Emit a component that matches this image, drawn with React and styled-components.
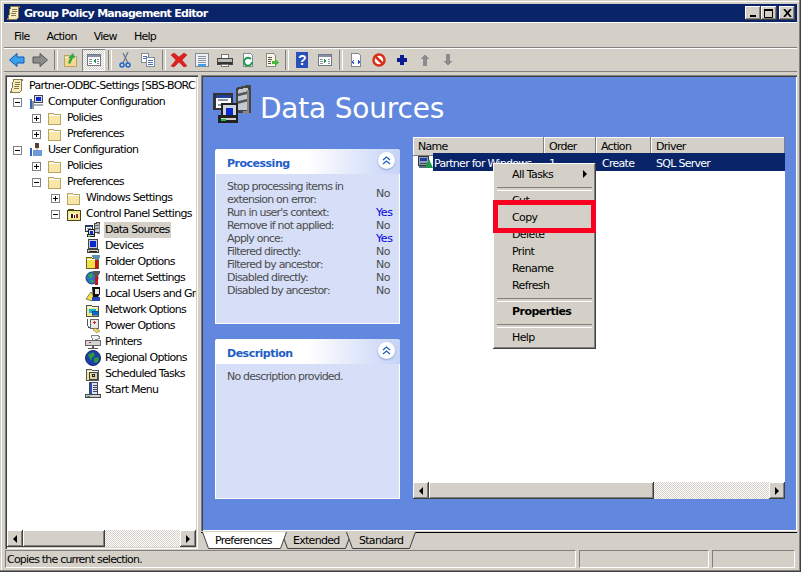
import styled, { createGlobalStyle } from 'styled-components'

const GlobalStyle = createGlobalStyle`
  html, body {
    margin: 0;
    padding: 0;
    background: #d4d0c8;
    overflow: hidden;
  }
  * {
    box-sizing: border-box;
  }
`

const FONT = `"DejaVu Sans", Verdana, sans-serif`
const BEVEL = 'inset -1px -1px #404040, inset 1px 1px #fff, inset -2px -2px #808080'

const Frame = styled.div`
  width: 801px;
  height: 572px;
  padding: 4px;
  display: flex;
  flex-direction: column;
  background: #d4d0c8;
  font-family: ${FONT};
  font-size: 11px;
  letter-spacing: -0.72px;
  color: #000;
  box-shadow: inset -1px -1px #404040, inset -2px -2px #808080, inset 1px 1px #d4d0c8, inset 2px 2px #fff;
  overflow: hidden;
`

const TitleBar = styled.div`
  height: 18px;
  flex: none;
  display: flex;
  align-items: center;
  padding: 0 2px 0 2px;
  background: #0a246a;
  color: #fff;
  font-weight: 700;
  letter-spacing: -0.7px;
`

const TitleText = styled.span`
  margin-left: 2px;
  flex: 1;
`

const WinButtons = styled.div`
  display: flex;
`

const WinButton = styled.div`
  width: 16px;
  height: 14px;
  margin-left: ${p => p.$gap || 0}px;
  background: #d4d0c8;
  box-shadow: ${BEVEL};
  display: flex;
  align-items: center;
  justify-content: center;
`

const MenuBar = styled.div`
  height: 25px;
  flex: none;
  display: flex;
  align-items: center;
  gap: 17px;
  padding: 2px 0 0 10px;
  border-top: 1px solid #fff;
`

const Toolbar = styled.div`
  height: 25px;
  flex: none;
  display: flex;
  align-items: center;
  padding-left: 1px;
  border-top: 1px solid #808080;
  border-bottom: 1px solid #808080;
  box-shadow: inset 0 1px #fff;
`

const ToolButton = styled.div`
  width: 23px;
  height: 22px;
  flex: none;
  display: flex;
  align-items: center;
  justify-content: center;
  ${p => p.$pressed && `
    background: repeating-conic-gradient(#d4d0c8 0 25%, #fff 0 50%) 0 0 / 2px 2px;
    box-shadow: inset 1px 1px #808080, inset -1px -1px #fff;
  `}
`

const ToolSep = styled.div`
  width: 8px;
  height: 20px;
  flex: none;
  &:after {
    content: '';
    display: block;
    width: 2px;
    height: 20px;
    margin-left: 3px;
    border-left: 1px solid #808080;
    border-right: 1px solid #fff;
  }
`

const Main = styled.div`
  flex: 1;
  min-height: 0;
  display: flex;
  padding: 3px 0 0 1px;
  gap: 3px;
`

const TreePanel = styled.div`
  width: 193px;
  flex: none;
  display: flex;
  flex-direction: column;
  padding: 2px;
  background: #fff;
  box-shadow: inset 1px 1px #808080, inset 2px 2px #404040, inset -1px -1px #fff, inset -2px -2px #d4d0c8;
`

const TreeList = styled.div`
  flex: 1;
  min-height: 0;
  overflow: hidden;
  padding-top: 1px;
`

const TreeRow = styled.div`
  height: 16px;
  display: flex;
  align-items: center;
  padding-left: ${p => p.$indent}px;
  white-space: nowrap;
`

const Expander = styled.div`
  width: 9px;
  height: 9px;
  flex: none;
  border: 1px solid #808080;
  background: #fff;
  position: relative;
  margin-right: 6px;
  &:before {
    content: '';
    position: absolute;
    left: 1px;
    top: 3px;
    width: 5px;
    height: 1px;
    background: #000;
  }
  ${p => p.$plus && `
    &:after {
      content: '';
      position: absolute;
      left: 3px;
      top: 1px;
      width: 1px;
      height: 5px;
      background: #000;
    }
  `}
`

const TreeLabel = styled.span`
  margin-left: 3px;
  padding: 1px;
  line-height: 14px;
  ${p => p.$selected && 'background: #d4d0c8;'}
`

const Scrollbar = styled.div`
  height: 17px;
  flex: none;
  display: flex;
  background: repeating-conic-gradient(#d4d0c8 0 25%, #fff 0 50%) 0 0 / 2px 2px;
`

const ScrollButton = styled.div`
  width: 16px;
  flex: none;
  background: #d4d0c8;
  box-shadow: ${BEVEL};
  display: flex;
  align-items: center;
  justify-content: center;
`

const ScrollThumb = styled.div`
  width: ${p => p.$width}px;
  flex: none;
  background: #d4d0c8;
  box-shadow: ${BEVEL};
`

const ScrollTrack = styled.div`
  flex: 1;
`

const Arrow = styled.div`
  width: 0;
  height: 0;
  border-top: 4px solid transparent;
  border-bottom: 4px solid transparent;
  ${p => (p.$right ? 'border-left: 4px solid #000;' : 'border-right: 4px solid #000;')}
`

const RightSide = styled.div`
  flex: 1;
  min-width: 0;
  display: flex;
  flex-direction: column;
`

const Pane = styled.div`
  height: 456px;
  flex: none;
  padding: 2px 12px 0 12px;
  background: #6287de;
  box-shadow: inset 1px 1px #808080, inset 2px 2px #404040, inset -1px -1px #fff;
`

const PaneHead = styled.div`
  height: 60px;
  display: flex;
  align-items: flex-start;
  padding-top: 8px;
`

const PaneTitle = styled.h1`
  margin: 7px 0 0 7px;
  font-size: 28px;
  line-height: 34px;
  font-weight: 400;
  letter-spacing: -0.2px;
  color: #fff;
`

const Columns = styled.div`
  display: flex;
  gap: 13px;
  padding-left: 2px;
`

const SideColumn = styled.div`
  width: 185px;
  flex: none;
  padding-top: 12px;
  display: flex;
  flex-direction: column;
  gap: 15px;
`

const Card = styled.section`
  height: ${p => p.$height}px;
  background: #d6dff7;
  border: 1px solid #fff;
  border-top: 0;
  border-radius: 3px 3px 0 0;
`

const CardHead = styled.div`
  height: 25px;
  margin: 0 -1px;
  display: flex;
  align-items: center;
  justify-content: space-between;
  padding: 3px 5px 0 12px;
  border-radius: 3px 3px 0 0;
  background: linear-gradient(90deg, #fff 0%, #fff 50%, #c6d3f7 100%);
  color: #215dc6;
  font-weight: 700;
  letter-spacing: -0.5px;
`

const Chevrons = styled.div`
  width: 17px;
  height: 17px;
  margin-top: -5px;
  border-radius: 50%;
  background: #fff;
  box-shadow: 0 1px 2px #8ca0d0;
  display: flex;
  align-items: center;
  justify-content: center;
`

const CardBody = styled.div`
  padding: 6px 6px 0 11px;
  line-height: 13px;
  color: #4c4c4c;
  letter-spacing: -0.8px;
`

const FactRow = styled.div`
  display: grid;
  grid-template-columns: 149px 1fr;
  align-items: center;
`

const FactValue = styled.span`
  color: ${p => (p.$yes ? '#0000e0' : '#4c4c4c')};
  letter-spacing: -0.4px;
`

const ListBox = styled.div`
  width: 372px;
  height: 362px;
  flex: none;
  position: relative;
  display: flex;
  flex-direction: column;
  background: #fff;
`

const ListHeader = styled.div`
  height: 16px;
  flex: none;
  display: grid;
  grid-template-columns: 131px 52px 55px 1fr;
`

const ListColumn = styled.div`
  background: #d4d0c8;
  padding-left: 5px;
  line-height: 19px;
  box-shadow: inset -1px -1px #808080, inset 1px 1px #fff;
`

const ListBody = styled.div`
  flex: 1;
`

const ListRow = styled.div`
  height: 18px;
  display: flex;
`

const RowIcon = styled.div`
  width: 20px;
  flex: none;
  padding-left: 4px;
  padding-top: 1px;
`

const RowCells = styled.div`
  flex: 1;
  display: grid;
  grid-template-columns: 115px 53px 54px 1fr;
  align-items: center;
  padding: 2px 0 0 1px;
  background: #0a246a;
  color: #fff;
`

const ContextMenu = styled.div`
  position: absolute;
  left: 80px;
  top: 26px;
  width: 103px;
  padding: 3px;
  background: #d4d0c8;
  box-shadow: ${BEVEL};
  z-index: 2;
`

const MenuEntry = styled.div`
  height: 17px;
  line-height: 17px;
  padding-left: 16px;
  position: relative;
  letter-spacing: ${p => (p.$bold ? '-0.55px' : '-0.6px')};
  font-weight: ${p => (p.$bold ? 700 : 400)};
`

const MenuArrow = styled(Arrow)`
  position: absolute;
  right: 6px;
  top: 4px;
`

const MenuSep = styled.div`
  height: 9px;
  padding: 4px 1px 0;
  &:after {
    content: '';
    display: block;
    height: 2px;
    border-top: 1px solid #808080;
    border-bottom: 1px solid #fff;
  }
`

const Highlight = styled.div`
  position: absolute;
  left: 0;
  top: 37px;
  width: 103px;
  height: 33px;
  border: 5px solid #f80020;
`

const TabStrip = styled.div`
  height: 18px;
  flex: none;
  margin-top: 1px;
  display: flex;
  padding-left: 1px;
  border-top: 1px solid #000;
`

const Tab = styled.div`
  position: relative;
  width: ${p => p.$width}px;
  height: 17px;
  margin-top: -1px;
  margin-left: ${p => (p.$first ? 0 : -6)}px;
  padding-left: ${p => p.$pad}px;
  line-height: 18px;
  z-index: ${p => (p.$active ? 1 : 0)};
  & > svg {
    position: absolute;
    left: 0;
    top: 0;
  }
  & > span {
    position: relative;
  }
`

const StatusBar = styled.div`
  height: 18px;
  flex: none;
  margin-top: 1px;
  display: flex;
  gap: 3px;
  padding-left: 1px;
`

const StatusCell = styled.div`
  width: ${p => p.$width}px;
  flex: none;
  padding-left: 1px;
  line-height: 17px;
  letter-spacing: -0.8px;
  border-top: 1px solid #808080;
  border-left: 1px solid #808080;
  border-bottom: 1px solid #fff;
  border-right: 1px solid #fff;
  white-space: nowrap;
`

const Svg = ({ size = 16, children }) => (
  <svg width={size} height={size} viewBox="0 0 16 16" style={{ flex: 'none', display: 'block' }} shapeRendering="crispEdges">
    {children}
  </svg>
)

const Folder = ({ fill = '#f7e7a6', stroke = '#b8a466' }) => (
  <>
    <path d="M1.500 3.500h5l1 1h6v10h-12z" fill={fill} stroke={stroke} />
    <path d="M2 5.500h11" stroke="#fff" />
  </>
)

const Page = ({ fill = '#fff' }) => <path d="M3.500 1.500h7l2 2v11h-9z" fill={fill} stroke="#7f8a99" />

const Monitor = () => (
  <>
    <path d="M3.500 1.500h9v9h-9z" fill="#c8ccd4" stroke="#444" />
    <path d="M5 3h6v6H5z" fill="#0a2ad0" />
    <path d="M2.500 11.500h11v3h-11z" fill="#d4d0c8" stroke="#444" />
    <path d="M4 13h8" stroke="#222" />
  </>
)

const Win = ({ arrow }) => (
  <>
    <path d="M1.500 2.500h13v11h-13z" fill="#fff" stroke="#6f7a88" />
    <path d="M2 3h12v2H2z" fill="#8792a0" />
    <path d="M3 7h3M3 9h3M3 11h3M11 7h2M11 9h2M11 11h2" stroke="#8792a0" />
    <path d={arrow} fill="#1f9a4a" />
  </>
)

const ICONS = {
  back: <path d="M.500 8l7.500-6.500v3.500h7v6H8v3.500z" fill="#3aa0ec" stroke="#0b5cb5" shapeRendering="auto" />,
  forward: <path d="M15.500 8L8 1.500v3.500H1v6h7v3.500z" fill="#8c8c8c" stroke="#555" shapeRendering="auto" />,
  upfolder: (
    <>
      <Folder fill="#f5d98c" />
      <path d="M5 11l2-5-2 0 5-5 2 5-2 0-3 6z" fill="#2fa84a" shapeRendering="auto" />
    </>
  ),
  tree: <Win arrow="M10 7v4L7 9z" />,
  cut: (
    <g shapeRendering="auto" fill="none">
      <path d="M11 0L6 11M6 1l5 10" stroke="#6a7a90" strokeWidth="1.300" />
      <circle cx="5" cy="13" r="2" stroke="#1f66c8" strokeWidth="1.500" />
      <circle cx="11" cy="13" r="2" stroke="#1f66c8" strokeWidth="1.500" />
    </g>
  ),
  copy: (
    <>
      <path d="M1.500 1.500h7v9h-7z" fill="#fff" stroke="#7f8a99" />
      <path d="M3 4h4M3 6h4" stroke="#4a6fb0" />
      <path d="M6.500 5.500h8v9h-8z" fill="#fff" stroke="#7f8a99" />
      <path d="M8 8h5M8 10h5M8 12h5" stroke="#4a6fb0" />
    </>
  ),
  del: <path d="M0 3l3-2 5 4 5-4 3 2-5 5 5 6-3 1-5-5-5 5-3-1 5-6z" fill="#e02020" stroke="#a81818" strokeWidth=".5" shapeRendering="auto" />,
  props: (
    <>
      <path d="M1.500 1.500h13v13h-13z" fill="#eef0f4" stroke="#7f8a99" />
      <path d="M4 4h8M4 6h8M4 8h8M4 10h8" stroke="#8a96a8" />
      <path d="M4 13h8" stroke="#3aa0ec" strokeWidth="2" />
    </>
  ),
  print: (
    <>
      <path d="M4.500 2.500h7v4h-7z" fill="#fff" stroke="#777" />
      <path d="M.500 6.500h15v6H.500z" fill="#b8b8b8" stroke="#444" />
      <path d="M1 10h14v2H1z" fill="#333" />
      <path d="M4.500 12.500h7v2h-7z" fill="#fff" stroke="#777" />
    </>
  ),
  refresh: (
    <>
      <Page />
      <path d="M12 10a4 4 0 1 1-1-3" fill="none" stroke="#1f9a4a" strokeWidth="2" shapeRendering="auto" />
    </>
  ),
  exportList: (
    <>
      <Page fill="#fbf6dc" />
      <path d="M5 5h4M5 7h4M5 9h3M5 11h3" stroke="#555" />
      <path d="M9 9h3V7l4 3.500-4 3.500v-2H9z" fill="#4ab83a" />
    </>
  ),
  help: (
    <>
      <path d="M2 0h12v16H2z" fill="#2a4fb8" />
      <text x="8" y="13" textAnchor="middle" fontSize="14" fontWeight="700" fill="#fff" fontFamily="Liberation Sans, sans-serif">?</text>
    </>
  ),
  panel: <Win arrow="M7 7v4l3-2z" />,
  doc: (
    <>
      <Page />
      <path d="M6 8L4.500 10 6 12M10 8l1.500 2L10 12" fill="none" stroke="#1f4fc8" />
    </>
  ),
  stop: (
    <g shapeRendering="auto">
      <circle cx="8" cy="8" r="5.500" fill="#fff" stroke="#d83018" strokeWidth="2.500" />
      <path d="M4 4l8 8" stroke="#d83018" strokeWidth="2.500" />
    </g>
  ),
  plus: <path d="M6 3h4v3h3v4h-3v3H6v-3H3V6h3z" fill="#0a1a90" />,
  up: <path d="M8 2l4 5h-2v7H6V7H4z" fill="#8c8c8c" />,
  down: <path d="M8 14l4-5h-2V2H6v7H4z" fill="#8c8c8c" />,
  scroll: (
    <>
      <path d="M4.500 1.500h9l-1 2v9l-2 2h-9l1-2z" fill="#f7edc0" stroke="#8a7a4a" />
      <path d="M6 4h5M6 6h5M5 8h5M5 10h5" stroke="#8a7a4a" />
    </>
  ),
  computer: (
    <>
      <path d="M6.500 1.500h8v7h-8z" fill="#d8dce4" stroke="#445" />
      <path d="M8 3h5v4H8z" fill="#0a2ad0" />
      <path d="M5 10h10v2H5z" fill="#a8b0bc" />
      <path d="M2 5h2v10H2z" fill="#3464b4" />
      <path d="M4 7h2v8H4z" fill="#8a94a4" />
    </>
  ),
  user: (
    <>
      <path d="M7 1h4v5H7z" fill="#5a4030" />
      <path d="M5 8h9v6H5z" fill="#6a9ad8" />
      <path d="M8 6h2v2H8z" fill="#e8c090" />
      <path d="M2 6h2v8H2z" fill="#3464b4" />
    </>
  ),
  folder: <Folder />,
  cpfolder: (
    <>
      <path d="M1.500 4.500h13v10h-13z" fill="#f4e88c" stroke="#4a4418" />
      <path d="M2 3h6v1H2z" fill="#4a4418" />
      <path d="M3 7h10v5H3z" fill="#fff8c8" />
      <path d="M5 8h2v4H5zM8 9h1v3H8z" fill="#222" />
      <path d="M10 8h2v4h-2z" fill="#c01818" />
    </>
  ),
  data: (
    <>
      <path d="M9.500 1.500l4-1h1v10h-5z" fill="#c4c8d0" stroke="#444" />
      <path d="M10 4l4-1M10 7l4-1" stroke="#555" shapeRendering="auto" />
      <path d="M12 11h2v-9" fill="none" stroke="#888" />
      <path d="M.500 3.500h7v6h-7z" fill="#fff" stroke="#333" />
      <path d="M1 4h6v1H1z" fill="#2040a0" />
      <path d="M2 6h4M2 8h4" stroke="#8a96a8" />
      <path d="M3.500 7.500h6v5h-6z" fill="#d0d4dc" stroke="#222" />
      <path d="M5 9h3v3H5z" fill="#0a2ad0" />
      <path d="M2.500 12.500h7v2h-7z" fill="#d4d0c8" stroke="#222" />
      <path d="M3 14h2" stroke="#18c050" />
    </>
  ),
  listdata: (
    <>
      <path d="M1.500 2.500h10v9h-10z" fill="#8fa0b8" stroke="#333" />
      <path d="M3 4h7v3H3z" fill="#2040a0" />
      <path d="M3 9h7v1H3z" fill="#3a4a60" />
      <path d="M2 12h8v2H2z" fill="#5a6a80" />
      <path d="M12 5l4 9H8z" fill="#1f9a4a" shapeRendering="auto" />
    </>
  ),
  devices: <Monitor />,
  folderopts: (
    <>
      <Folder fill="#f2e04a" stroke="#6a6020" />
      <path d="M10 6h3v9h-3z" fill="#c01818" />
      <path d="M7 1h8v2l-2 3h-3L7 3z" fill="#5a90b0" />
    </>
  ),
  internet: (
    <g shapeRendering="auto">
      <circle cx="7" cy="8" r="6" fill="#2a70c8" stroke="#1a3a70" />
      <path d="M3 5l4-2 1 3-3 3zM5 10l4 0-2 4z" fill="#2fa84a" />
      <path d="M8 1h7v2l-2 3h-3L8 3z" fill="#555" />
      <path d="M10 6h3v9h-3z" fill="#c01818" />
    </g>
  ),
  users: (
    <g shapeRendering="auto">
      <path d="M1 13l5-7 4 5-3 4z" fill="#f2e04a" stroke="#333" strokeWidth=".6" />
      <path d="M7 1h8v7l-2 3H8z" fill="#111" />
      <path d="M10 3h4v5h-4z" fill="#f0e8e0" />
      <path d="M7 11h8v4H7z" fill="#2848b8" />
    </g>
  ),
  network: (
    <>
      <Folder fill="#f2e88a" stroke="#555" />
      <path d="M4 7h7v4H4z" fill="#18b0d8" />
      <path d="M7 9h6v4H7z" fill="#0a6ad0" stroke="#10405a" strokeWidth=".5" />
    </>
  ),
  power: (
    <>
      <path d="M1.500 1.500h1c0 6 0 9 5 9" fill="none" stroke="#555" />
      <path d="M5.500 1.500h8v9h-8z" fill="#e8e8e8" stroke="#666" />
      <path d="M9 3h1v3H9zM8 4h3v1H8z" fill="#d02020" />
      <path d="M10 10l5 3-3 2-4-3z" fill="#f2d84a" stroke="#666" strokeWidth=".5" shapeRendering="auto" />
    </>
  ),
  printers: (
    <>
      <path d="M6 1h7l2 3-7 3z" fill="#f4f4f4" stroke="#888" />
      <path d="M.500 6.500h15v5H.500z" fill="#d4d4d4" stroke="#666" />
      <path d="M4 8h2v1H4z" fill="#d02020" />
      <path d="M7 12h2v2H7zM3 14h10v1H3z" fill="#555" />
    </>
  ),
  regional: (
    <g shapeRendering="auto">
      <circle cx="8" cy="8" r="7.500" fill="#1c3ea8" stroke="#122a70" />
      <path d="M3 5l5-3 2 3-3 3-1 3zM9 8l5-1-1 5-4 1z" fill="#2c9a3a" />
    </g>
  ),
  tasks: (
    <>
      <Folder fill="#f2e88a" stroke="#555" />
      <path d="M4.500 6.500h8v7h-8z" fill="#d8d0a8" stroke="#444" />
      <path d="M7 8h3v3H7z" fill="#222" />
      <path d="M8 9h1v1H8z" fill="#f2e88a" />
    </>
  ),
  start: (
    <>
      <path d="M4.500 0.500h8v12h-8z" fill="#dfe6f4" stroke="#445" />
      <path d="M5 1h2v11H5z" fill="#2a4fb8" />
      <path d="M8 3h4M8 5h4M8 7h4M8 9h4" stroke="#445" />
      <path d="M.500 12.500h15v3H.500z" fill="#d4d0c8" stroke="#445" />
      <path d="M2 14h3v1H2z" fill="#1f9a4a" />
    </>
  ),
}

const Icon = ({ name, size }) => <Svg size={size}>{ICONS[name]}</Svg>

const TOOLS = [
  'back', 'forward', '|', 'upfolder', '*tree', '|', 'cut', 'copy', '|', 'del', 'props',
  'print', 'refresh', 'exportList', '|', 'help', 'panel', '|', 'doc', 'stop', 'plus', 'up', 'down',
]

const TREE = [
  { indent: 2, icon: 'scroll', text: 'Partner-ODBC-Settings [SBS-BORC' },
  { indent: 6, toggle: 'minus', icon: 'computer', text: 'Computer Configuration' },
  { indent: 25, toggle: 'plus', icon: 'folder', text: 'Policies' },
  { indent: 25, toggle: 'plus', icon: 'folder', text: 'Preferences' },
  { indent: 6, toggle: 'minus', icon: 'user', text: 'User Configuration' },
  { indent: 25, toggle: 'plus', icon: 'folder', text: 'Policies' },
  { indent: 25, toggle: 'minus', icon: 'folder', text: 'Preferences' },
  { indent: 44, toggle: 'plus', icon: 'folder', text: 'Windows Settings' },
  { indent: 44, toggle: 'minus', icon: 'cpfolder', text: 'Control Panel Settings' },
  { indent: 78, icon: 'data', text: 'Data Sources', selected: true },
  { indent: 78, icon: 'devices', text: 'Devices' },
  { indent: 78, icon: 'folderopts', text: 'Folder Options' },
  { indent: 78, icon: 'internet', text: 'Internet Settings' },
  { indent: 78, icon: 'users', text: 'Local Users and Groups' },
  { indent: 78, icon: 'network', text: 'Network Options' },
  { indent: 78, icon: 'power', text: 'Power Options' },
  { indent: 78, icon: 'printers', text: 'Printers' },
  { indent: 78, icon: 'regional', text: 'Regional Options' },
  { indent: 78, icon: 'tasks', text: 'Scheduled Tasks' },
  { indent: 78, icon: 'start', text: 'Start Menu' },
]

const FACTS = [
  ['Stop processing items in extension on error:', 'No'],
  ["Run in user's context:", 'Yes'],
  ['Remove if not applied:', 'No'],
  ['Apply once:', 'Yes'],
  ['Filtered directly:', 'No'],
  ['Filtered by ancestor:', 'No'],
  ['Disabled directly:', 'No'],
  ['Disabled by ancestor:', 'No'],
]

const TABS = [
  { label: 'Preferences', width: 85, pad: 13, active: true },
  { label: 'Extended', width: 71, pad: 12 },
  { label: 'Standard', width: 70, pad: 13 },
]

const Bar = ({ thumb }) => (
  <Scrollbar>
    <ScrollButton><Arrow /></ScrollButton>
    <ScrollThumb $width={thumb} />
    <ScrollTrack />
    <ScrollButton><Arrow $right /></ScrollButton>
  </Scrollbar>
)

const TabItem = ({ label, width, pad, active, first }) => (
  <Tab $width={width} $pad={pad} $active={active} $first={first}>
    <svg width={width} height={17}>
      <path
        d={`M0.500 0 L6.500 16.500 H${width - 6.5} L${width - 0.5} 0`}
        fill={active ? '#fff' : '#d4d0c8'}
        stroke="#404040"
      />
    </svg>
    <span>{label}</span>
  </Tab>
)

const Chevron = () => (
  <svg width="9" height="9" viewBox="0 0 9 9">
    <path d="M1 4l3.500-3L8 4M1 8l3.500-3L8 8" fill="none" stroke="#215dc6" strokeWidth="1.300" />
  </svg>
)

const App = () => {
  return (
    <Frame>
      <GlobalStyle />
      <TitleBar>
        <Icon name="scroll" />
        <TitleText>Group Policy Management Editor</TitleText>
        <WinButtons>
          <WinButton>
            <svg width="8" height="8"><path d="M1 6h6v2H1z" fill="#000" /></svg>
          </WinButton>
          <WinButton>
            <svg width="10" height="9"><path d="M.500 1.500h8v7h-8z" fill="none" stroke="#000" /><path d="M0 0h9v2H0z" /></svg>
          </WinButton>
          <WinButton $gap={2}>
            <svg width="9" height="8"><path d="M1 0l7 8M8 0L1 8" fill="none" stroke="#000" strokeWidth="1.800" /></svg>
          </WinButton>
        </WinButtons>
      </TitleBar>

      <MenuBar>
        <span>File</span>
        <span>Action</span>
        <span>View</span>
        <span>Help</span>
      </MenuBar>

      <Toolbar>
        {TOOLS.map((tool, i) => {
          if (tool === '|') return <ToolSep key={i} />
          const pressed = tool[0] === '*'
          return (
            <ToolButton key={i} $pressed={pressed}>
              <Icon name={pressed ? tool.slice(1) : tool} />
            </ToolButton>
          )
        })}
      </Toolbar>

      <Main>
        <TreePanel>
          <TreeList>
            {TREE.map((row, i) => (
              <TreeRow key={i} $indent={row.indent}>
                {row.toggle && <Expander $plus={row.toggle === 'plus'} />}
                <Icon name={row.icon} />
                <TreeLabel $selected={row.selected}>{row.text}</TreeLabel>
              </TreeRow>
            ))}
          </TreeList>
          <Bar thumb={82} />
        </TreePanel>

        <RightSide>
          <Pane>
            <PaneHead>
              <Icon name="data" size={40} />
              <PaneTitle>Data Sources</PaneTitle>
            </PaneHead>
            <Columns>
              <SideColumn>
                <Card $height={175}>
                  <CardHead>
                    Processing
                    <Chevrons><Chevron /></Chevrons>
                  </CardHead>
                  <CardBody>
                    {FACTS.map(([label, value]) => (
                      <FactRow key={label}>
                        <span>{label}</span>
                        <FactValue $yes={value === 'Yes'}>{value}</FactValue>
                      </FactRow>
                    ))}
                  </CardBody>
                </Card>
                <Card $height={160}>
                  <CardHead>
                    Description
                    <Chevrons><Chevron /></Chevrons>
                  </CardHead>
                  <CardBody>No description provided.</CardBody>
                </Card>
              </SideColumn>

              <ListBox>
                <ListHeader>
                  <ListColumn>Name</ListColumn>
                  <ListColumn>Order</ListColumn>
                  <ListColumn>Action</ListColumn>
                  <ListColumn>Driver</ListColumn>
                </ListHeader>
                <ListBody>
                  <ListRow>
                    <RowIcon><Icon name="listdata" /></RowIcon>
                    <RowCells>
                      <span>Partner for Windows</span>
                      <span>1</span>
                      <span>Create</span>
                      <span>SQL Server</span>
                    </RowCells>
                  </ListRow>
                </ListBody>
                <Bar thumb={225} />
                <ContextMenu>
                  <MenuEntry>All Tasks<MenuArrow $right /></MenuEntry>
                  <MenuSep />
                  <MenuEntry>Cut</MenuEntry>
                  <MenuEntry>Copy</MenuEntry>
                  <MenuEntry>Delete</MenuEntry>
                  <MenuEntry>Print</MenuEntry>
                  <MenuEntry>Rename</MenuEntry>
                  <MenuEntry>Refresh</MenuEntry>
                  <MenuSep />
                  <MenuEntry $bold>Properties</MenuEntry>
                  <MenuSep />
                  <MenuEntry>Help</MenuEntry>
                  <Highlight />
                </ContextMenu>
              </ListBox>
            </Columns>
          </Pane>
          <TabStrip>
            {TABS.map((tab, i) => <TabItem key={tab.label} {...tab} first={i === 0} />)}
          </TabStrip>
        </RightSide>
      </Main>

      <StatusBar>
        <StatusCell $width={571}>Copies the current selection.</StatusCell>
        <StatusCell $width={130} />
        <StatusCell $width={83} />
      </StatusBar>
    </Frame>
  )
}

export default App
